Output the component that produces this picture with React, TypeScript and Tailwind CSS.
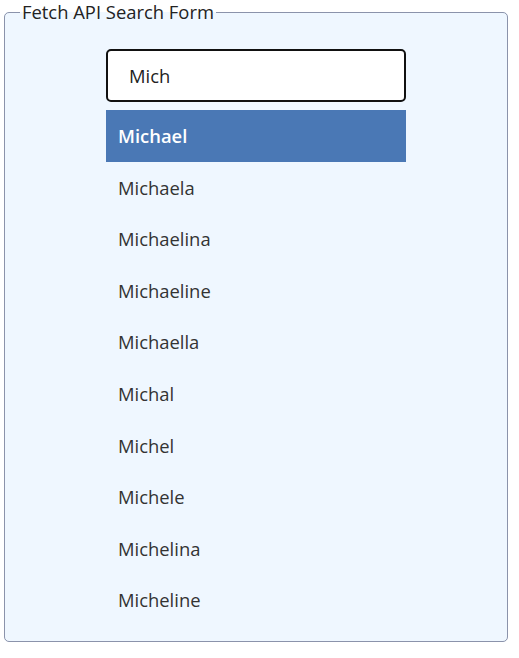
import { useState } from "react";

const NAMES = [
  "Michael",
  "Michaela",
  "Michaelina",
  "Michaeline",
  "Michaella",
  "Michal",
  "Michel",
  "Michele",
  "Michelina",
  "Micheline",
];

export default function App() {
  const [query, setQuery] = useState("Mich");
  const [active, setActive] = useState(0);

  const results = NAMES.filter((n) => n.toLowerCase().startsWith(query.toLowerCase()));

  return (
    <div className="min-h-[658px] bg-white font-['Open_Sans',sans-serif]">
      <fieldset className="ml-1 w-[504px] rounded-[5px] border border-[#8b93ab] bg-[#eff7ff] pb-[15px]">
        <legend className="ml-[15px] px-[2px] text-[18.4px] leading-[24px] text-[#222]">Fetch API Search Form</legend>
        <div className="mx-auto mt-[25px] w-[300px]">
          <input
            value={query}
            onChange={(e) => setQuery(e.target.value)}
            autoFocus
            className="h-[53px] w-full rounded-[5px] border-2 border-[#111] bg-white pl-[21px] text-[18.4px] text-[#222] outline-none"
          />
          <ul className="mt-[8px]">
            {results.map((name, i) => (
              <li
                key={name}
                onMouseEnter={() => setActive(i)}
                className={
                  i === active
                    ? "flex h-[51.6px] items-center bg-[#4a78b5] pl-3 text-[18.4px] font-semibold text-white"
                    : "flex h-[51.6px] items-center pl-3 text-[18.4px] text-[#333]"
                }
              >
                {name}
              </li>
            ))}
          </ul>
        </div>
      </fieldset>
    </div>
  );
}
